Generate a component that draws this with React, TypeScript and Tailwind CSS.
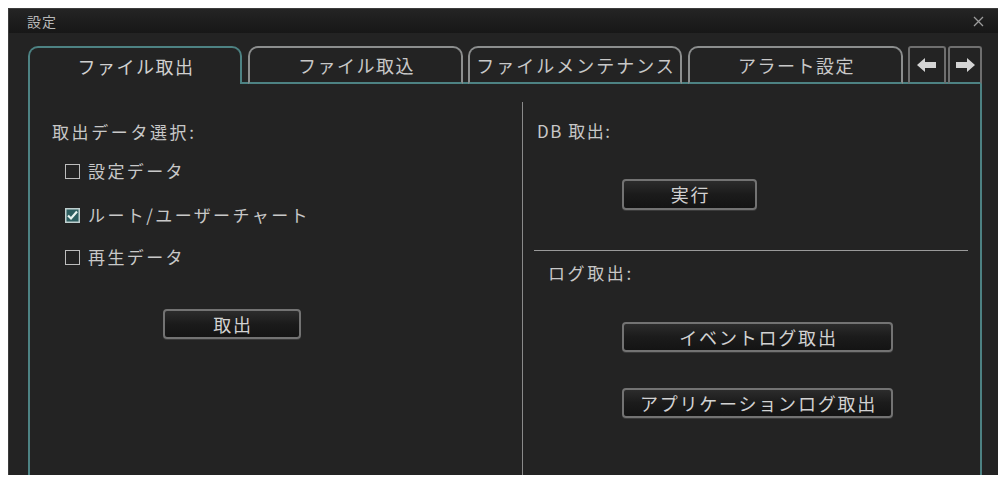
import React from "react";

function Check({ on }: { on?: boolean }) {
  if (on) {
    return (
      <svg width="15" height="15" viewBox="0 0 15 15">
        <rect x="0.75" y="0.75" width="13.5" height="13.5" fill="#2d5e60" stroke="#bfcfcf" strokeWidth="1.5" />
        <path d="M3 7.5 L6 10.5 L12 3.5" fill="none" stroke="#e8f4f0" strokeWidth="2.2" />
      </svg>
    );
  }
  return <div className="h-[15px] w-[15px] border-[1.5px] border-[#bdbdbd]" />;
}

function Btn({ label, className }: { label: string; className: string }) {
  return (
    <div
      className={
        "flex items-center justify-center rounded-[4px] border-2 border-[#737373] bg-linear-to-b from-[#2c2c2c] via-[#1b1b1b] to-[#141414] pl-[2px] text-[18px] tracking-[1.8px] text-[#d2d2d2] shadow-[0_1px_0_#3a3a3a] " +
        className
      }
    >
      {label}
    </div>
  );
}

export default function App() {
  return (
    <div className="h-screen w-full bg-white pl-[8px] pt-[8px] font-['Noto_Sans_CJK_JP',sans-serif]">
      <div className="flex h-[467px] flex-col border-l border-t border-[#3c3c3c] bg-[#232323]">
        {/* title bar */}
        <div className="flex h-[24px] items-center justify-between bg-linear-to-b from-[#242424] to-[#171717] pl-[18px] pr-[14px]">
          <span className="text-[14px] tracking-[1px] text-[#b8b8b8]">設定</span>
          <svg width="11" height="11" viewBox="0 0 11 11">
            <path d="M1 1 L10 10 M10 1 L1 10" stroke="#9c9c9c" strokeWidth="1.3" />
          </svg>
        </div>

        <div className="flex flex-1 flex-col pl-[19px] pr-[16px] pt-[13px]">
          {/* tabs */}
          <div className="flex h-[38px]">
            <div className="flex w-[214px] items-center justify-center rounded-t-[10px] border-2 border-b-0 border-[#4d8283] pl-[2px] text-[18px] tracking-[1.5px] text-[#d0d0d0]">
              ファイル取出
            </div>
            <div className="w-[6px] border-b-2 border-[#4d8283]" />
            <div className="flex w-[215px] items-center justify-center rounded-t-[10px] border-2 border-[#8c8e8e] border-b-[#4d8283] pl-[2px] text-[18px] tracking-[1.5px] text-[#c8c8c8]">
              ファイル取込
            </div>
            <div className="w-[5px] border-b-2 border-[#4d8283]" />
            <div className="flex w-[214px] items-center justify-center rounded-t-[10px] border-2 border-[#8c8e8e] border-b-[#4d8283] pl-[2px] text-[18px] tracking-[2px] text-[#c8c8c8]">
              ファイルメンテナンス
            </div>
            <div className="w-[6px] border-b-2 border-[#4d8283]" />
            <div className="flex w-[215px] items-center justify-center rounded-t-[10px] border-2 border-[#8c8e8e] border-b-[#4d8283] pl-[2px] text-[18px] tracking-[1.5px] text-[#c8c8c8]">
              アラート設定
            </div>
            <div className="w-[5px] border-b-2 border-[#4d8283]" />
            <div className="flex w-[38px] items-center justify-center rounded-t-[3px] border-2 border-[#6f6f6f] border-b-[#4d8283]">
              <svg width="20" height="14" viewBox="0 0 20 14">
                <polygon points="0,7 8,0 8,4 19,4 19,10 8,10 8,14" fill="#d4d4d4" />
              </svg>
            </div>
            <div className="w-[2px] border-b-2 border-[#4d8283]" />
            <div className="flex flex-1 items-center justify-center rounded-t-[3px] border-2 border-[#6f6f6f] border-b-[#4d8283]">
              <svg width="20" height="14" viewBox="0 0 20 14">
                <polygon points="20,7 12,0 12,4 1,4 1,10 12,10 12,14" fill="#d4d4d4" />
              </svg>
            </div>
          </div>

          {/* panel */}
          <div className="flex flex-1 border-x-2 border-[#4d8283] pt-[18px]">
            {/* left column */}
            <div className="flex w-[492px] flex-col">
              <div className="mt-[18px] h-[24px] pl-[22px] text-[17px] leading-[24px] tracking-[2.6px] text-[#c8c8c8]">
                取出データ選択:
              </div>
              <div className="mt-[15px] flex h-[24px] items-center gap-[8px] pl-[35px] text-[17px] tracking-[2.4px] text-[#c8c8c8]">
                <Check />
                <span>設定データ</span>
              </div>
              <div className="mt-[20px] flex h-[24px] items-center gap-[8px] pl-[35px] text-[17px] tracking-[2.4px] text-[#c8c8c8]">
                <Check on />
                <span>ルート/ユーザーチャート</span>
              </div>
              <div className="mt-[18px] flex h-[24px] items-center gap-[8px] pl-[35px] text-[17px] tracking-[2.4px] text-[#c8c8c8]">
                <Check />
                <span>再生データ</span>
              </div>
              <Btn label="取出" className="ml-[133px] mt-[40px] h-[30px] w-[138px]" />
            </div>

            {/* right column */}
            <div className="flex flex-1 flex-col border-l border-[#8a8a8a]">
              <div className="mt-[17px] h-[24px] pl-[14px] text-[17px] leading-[24px] tracking-[1.5px] text-[#c8c8c8]">
                DB 取出:
              </div>
              <Btn label="実行" className="ml-[99px] mt-[36px] h-[31px] w-[135px]" />
              <div className="ml-[11px] mt-[40px] h-px w-[434px] bg-[#9a9a9a]" />
              <div className="mt-[10px] h-[24px] pl-[25px] text-[17px] leading-[24px] tracking-[2.6px] text-[#c8c8c8]">
                ログ取出:
              </div>
              <Btn label="イベントログ取出" className="ml-[99px] mt-[37px] h-[30px] w-[271px]" />
              <Btn label="アプリケーションログ取出" className="ml-[99px] mt-[36px] h-[30px] w-[271px]" />
            </div>
          </div>
        </div>
      </div>
    </div>
  );
}
